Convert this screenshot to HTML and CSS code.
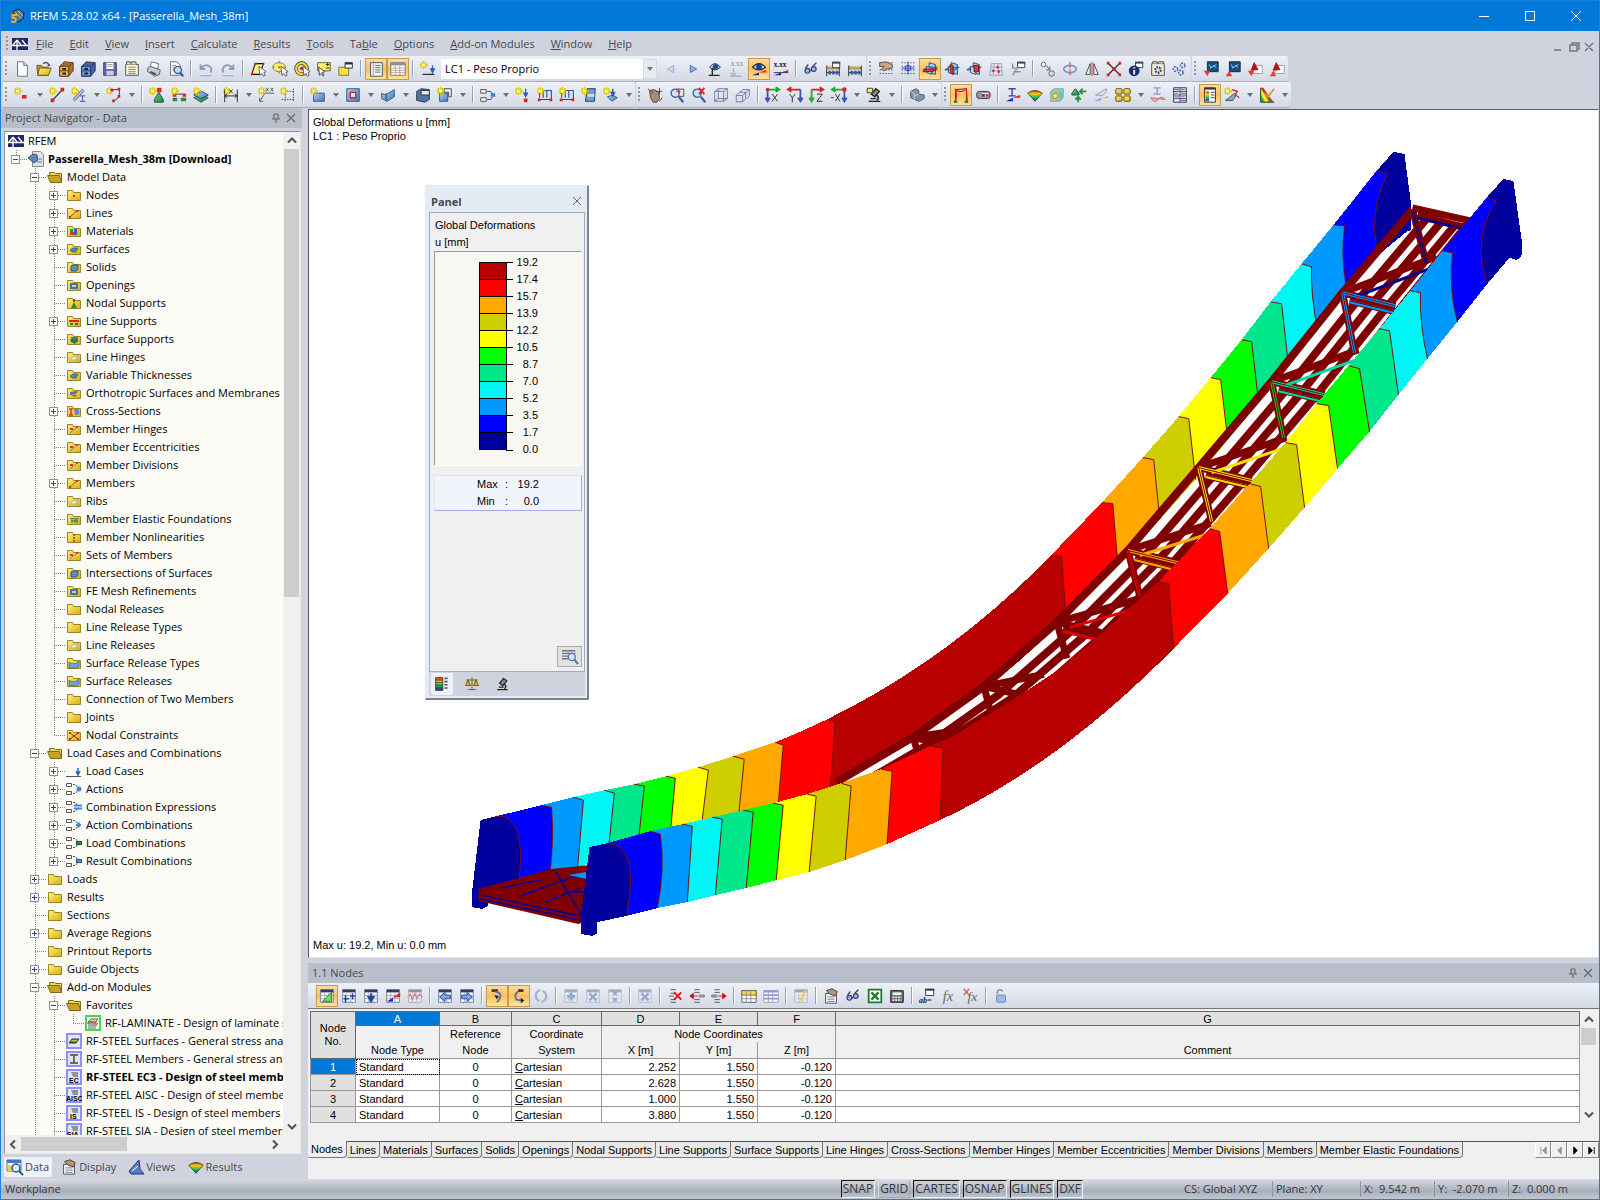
FILE: index.html
```html
<!DOCTYPE html>
<html lang="en">
<head>
<meta charset="utf-8">
<title>RFEM 5.28.02 x64 - [Passerella_Mesh_38m]</title>
<link rel="stylesheet" href="styles.css">
</head>
<body>
<svg class="defs" aria-hidden="true">
<defs>
<linearGradient id="gy" x1="0" y1="0" x2="1" y2="1"><stop offset="0" stop-color="#fff27a"/><stop offset="1" stop-color="#d9ae12"/></linearGradient>
<linearGradient id="gb" x1="0" y1="0" x2="1" y2="1"><stop offset="0" stop-color="#a9cdf0"/><stop offset="1" stop-color="#3f7ab8"/></linearGradient>
<linearGradient id="gg" x1="0" y1="0" x2="1" y2="1"><stop offset="0" stop-color="#7ed08a"/><stop offset="1" stop-color="#1c7a34"/></linearGradient>
<linearGradient id="rb" x1="0" y1="0" x2="0" y2="1"><stop offset="0" stop-color="#e22"/><stop offset=".3" stop-color="#fc0"/><stop offset=".6" stop-color="#2c4"/><stop offset="1" stop-color="#22d"/></linearGradient>
<symbol id="st" viewBox="0 0 20 20"><path d="M5 1v9M1 5.500h9M2 2.500l6 6M8 2.500l-6 6" stroke="#d8c400" stroke-width="1.500"/><circle cx="5" cy="5.500" r="2" fill="#fffb80"/></symbol>
<symbol id="logo" viewBox="0 0 16 14"><path fill="#1c2a66" d="M0 1h16v12H0z"/><path d="M0 8.500h16M5 3v10M5 3l-4 5M5 3l4 5M10 3l4 5" stroke="#fff" stroke-width="1.300" fill="none"/></symbol>
<symbol id="app" viewBox="0 0 16 16"><path d="M5 3l5-2 5 4-1 6-5 3-5-5z" fill="#5d7690" stroke="#223"/><path d="M6 4l6 6M9 3l5 5" stroke="#a8bccf"/><path d="M8 7H3.500v3c4-1 4.500 4 1 4L2 13.500" fill="none" stroke="#f2b01c" stroke-width="2"/></symbol>
<symbol id="new" viewBox="0 0 20 20"><path d="M5 2h7l4 4v12H5z" fill="#fff" stroke="#667"/><path d="M12 2v4h4" fill="#dde" stroke="#667"/></symbol>
<symbol id="open" viewBox="0 0 20 20"><path d="M2 6h5l2 2h6v9H3z" fill="#b8952a" stroke="#6d5614"/><path d="M5 9h13l-3 8H3z" fill="url(#gy)" stroke="#6d5614"/><path d="M9 4q4-3 7 2l-2 0" fill="none" stroke="#447" stroke-width="1.500"/></symbol>
<symbol id="box" viewBox="0 0 20 20"><path d="M3 7l5-5 10 1v9l-5 6H3z" fill="#a87428" stroke="#5a3c14"/><path d="M3 7h10v11H3zM13 7l5-4M3 12h10" fill="#e0b060" stroke="#5a3c14"/><path d="M6 10h4M6 15h4" stroke="#321" stroke-width="2"/></symbol>
<symbol id="boxb" viewBox="0 0 20 20"><path d="M3 7l5-5 10 1v9l-5 6H3z" fill="#4464a8" stroke="#22305c"/><path d="M3 7h10v11H3zM13 7l5-4M3 12h10" fill="#7496d8" stroke="#22305c"/><path d="M6 10h4M6 15h4" stroke="#124" stroke-width="2"/></symbol>
<symbol id="save" viewBox="0 0 20 20"><path d="M3 3h14v14H3z" fill="#6a62a8" stroke="#3c3768"/><path d="M6 3h8v7H6z" fill="#fff"/><path d="M6 12h8v5H6z" fill="#ccd"/><path d="M7 5h6M7 7h6" stroke="#999"/></symbol>
<symbol id="doc" viewBox="0 0 20 20"><path d="M3 5h14v12H3z" fill="#fdf6e0" stroke="#444"/><path d="M4 5V2h4l1 2 1-2h4l1 3" fill="#eda" stroke="#444"/><path d="M6 8h8M6 10.500h8M6 13h8M6 15h8" stroke="#777"/></symbol>
<symbol id="print" viewBox="0 0 20 20"><path d="M6 8l1-6 8 2-1 6z" fill="#fff" stroke="#667"/><path d="M3 9l3-2 11 4-1 5-5 2-8-5z" fill="#c4cad8" stroke="#556"/><path d="M6 13l6 3" stroke="#445" stroke-width="2"/></symbol>
<symbol id="prev" viewBox="0 0 20 20"><path d="M4 2h7l4 4v11H4z" fill="#fff" stroke="#667"/><path d="M6 6h4M6 8h3M6 10h3M6 12h3" stroke="#889"/><circle cx="12" cy="11" r="4" fill="#bcd8f4" stroke="#3b5f98" stroke-width="1.500"/><path d="M14.500 14l3.500 4" stroke="#3b5f98" stroke-width="2.500"/></symbol>
<symbol id="undo" viewBox="0 0 20 20"><path d="M4 5v5h5M5 9q5-6 10-1 2 3 0 6" fill="none" stroke="#8b9bb8" stroke-width="2"/><path d="M4 17.500h12" stroke="#8b9bb8"/></symbol>
<symbol id="redo" viewBox="0 0 20 20"><path d="M16 5v5h-5M15 9q-5-6-10-1-2 3 0 6" fill="none" stroke="#8b9bb8" stroke-width="2"/><path d="M4 17.500h12" stroke="#8b9bb8"/></symbol>
<symbol id="cur" viewBox="0 0 20 20"><path d="M11 7l1 10 2.500-2 1.500 3 2-1-1.500-3 2.500-1z" fill="#fff" stroke="#333" stroke-width=".8"/></symbol>
<symbol id="s1" viewBox="0 0 20 20"><path d="M7 4h9l-4 12H3z" fill="#fff38a" stroke="#111" stroke-width="1.200"/><path d="M6 3h3v2H6zM15 3h2v2h-2zM2 15h3v2H2z" fill="#e11"/><use href="#cur"/></symbol>
<symbol id="s2" viewBox="0 0 20 20"><ellipse cx="9" cy="8" rx="7" ry="5" fill="#ffee6a" stroke="#876"/><path d="M9 1v14M2 8h14" stroke="#e22" stroke-dasharray="2 4"/><use href="#cur"/></symbol>
<symbol id="s3" viewBox="0 0 20 20"><circle cx="9.500" cy="9.500" r="6" fill="none" stroke="#222" stroke-width="4"/><circle cx="9.500" cy="9.500" r="6" fill="none" stroke="#fd2" stroke-width="2.500"/><circle cx="9.500" cy="9.500" r="2" fill="#e22"/><use href="#cur"/></symbol>
<symbol id="s4" viewBox="0 0 20 20"><path d="M3 3h14v9H3z" fill="#ffee6a" stroke="#665c10"/><path d="M12 5h4M14 3v4M12 9h4" stroke="#222"/><path d="M4 8l1 9 2-2 2 3 1-1-2-3 3-1z" fill="#fff" stroke="#333"/></symbol>
<symbol id="s5" viewBox="0 0 20 20"><path d="M2 8h11v9H2z" fill="#ffe14a" stroke="#86701a"/><path d="M9 3h8v6H9z" fill="#fff" stroke="#223"/><path d="M9 3h8v2H9z" fill="#234"/></symbol>
<symbol id="nav" viewBox="0 0 20 20"><path d="M4 3h13v15H4z" fill="#fff" stroke="#345"/><path d="M7 4v13" stroke="#789"/><path d="M9 6h6M9 8.500h6M9 11h6M9 13.500h6" stroke="#456"/></symbol>
<symbol id="tab" viewBox="0 0 20 20"><path d="M2 3h16v14H2z" fill="#fff" stroke="#656c78"/><path d="M2 3h16v3H2z" fill="#8a94a4"/><path d="M2 9h16M2 11.500h16M2 14h16M7 6v11M12 6v11" stroke="#b2a890"/></symbol>
<symbol id="ld" viewBox="0 0 20 20"><use href="#st"/><path d="M4 16h13" stroke="#333" stroke-width="1.500"/><path d="M15 6v6M13 10l2 4 2-4z" stroke="#2b5fb4" stroke-width="1.500" fill="#2b5fb4"/></symbol>
<symbol id="lt" viewBox="0 0 20 20"><path d="M13 6v8l-7-4z" fill="#cfe0ff" stroke="#8ba3d0"/></symbol>
<symbol id="gt" viewBox="0 0 20 20"><path d="M7 6v8l7-4z" fill="#8fb0f0" stroke="#3d64b8"/></symbol>
<symbol id="ey1" viewBox="0 0 20 20"><path d="M4 8q6-8 12 0-6 6-12 0z" fill="#b9d2ef" stroke="#222"/><circle cx="10.500" cy="7.500" r="3" fill="#234a94"/><path d="M7 9v8M3 17h12" stroke="#222" stroke-width="1.500"/></symbol>
<symbol id="xx1" viewBox="0 0 20 20"><text x="3" y="7" font-size="8" fill="#888" font-family="Liberation Serif">x.xx</text><path d="M6 9v8M3 14l3 4 3-4M2 18h13" stroke="#a7b4cc" fill="none" stroke-width="1.500"/></symbol>
<symbol id="eye" viewBox="0 0 20 20"><path d="M3 8q7-8 14 0-7 6-14 0z" fill="#c9def5" stroke="#222" stroke-width="1.300"/><circle cx="10" cy="7.500" r="3.200" fill="#1c3f8a"/><path d="M2 17l8-3v3z" fill="#22c"/><path d="M10 14l8-3v3z" fill="#d22"/></symbol>
<symbol id="xx2" viewBox="0 0 20 20"><text x="2" y="8" font-size="8" font-weight="bold" fill="#111" font-family="Liberation Serif">x.xx</text><path d="M2 17l8-3v3z" fill="#22c"/><path d="M10 14l8-3v3z" fill="#d22"/><path d="M2 14h16" stroke="#333"/></symbol>
<symbol id="glas" viewBox="0 0 20 20"><path d="M4 9l3-4M12 7l4-4M8 12h2" stroke="#445" stroke-width="1.500"/><circle cx="6" cy="12" r="2.700" fill="#9fb4dc" stroke="#2b3f78" stroke-width="1.300"/><circle cx="13" cy="10" r="2.700" fill="#9fb4dc" stroke="#2b3f78" stroke-width="1.300"/></symbol>
<symbol id="aba" viewBox="0 0 20 20"><path d="M3 6v12M17 6v12M3 9h14M3 14h14" stroke="#222"/><path d="M4 7h3v4H4zM8 7h3v4H8zM12 7h3v4h-3z" fill="#ca4"/><path d="M5 12h3v4H5zM9 12h3v4H9zM13 12h3v4h-3z" fill="#3557a8"/></symbol>
<symbol id="win" viewBox="0 0 20 20"><path d="M9.500 2.500h8v6h-8z" fill="#fff" stroke="#334"/><path d="M9 2h9v2H9z" fill="#345"/></symbol>
<symbol id="dots" viewBox="0 0 20 20"><path d="M3 3h15M3 7h15M3 11h15M3 15h15" stroke="#333" stroke-width="1.200" stroke-dasharray="1.200 2"/></symbol>
<symbol id="hand" viewBox="0 0 20 20"><path d="M3 3l7-1 7 3v4l-6 1-4 2-2-2 3-3H3z" fill="#c8a58c" stroke="#5c4636"/></symbol>
<symbol id="snp" viewBox="0 0 20 20"><use href="#dots"/><circle cx="10" cy="9" r="3" fill="none" stroke="#23c"/><path d="M10 2v14M3 9h14" stroke="#23c"/></symbol>
<symbol id="pl" viewBox="0 0 20 20"><path d="M9 3l7 2v11l-7-2z" fill="#a8cdee" stroke="#1b4e84"/><path d="M2 11l5-3h11l-5 3z" fill="#6ea6d8" stroke="#1b4e84"/><path d="M6 7l6 2v7l-6-2z" fill="#bcdaf4" stroke="#1b4e84"/></symbol>
<symbol id="p1" viewBox="0 0 20 20"><use href="#pl"/><path d="M2 13l5-3h11l-5 3z" fill="#e33" stroke="#711"/></symbol>
<symbol id="p2" viewBox="0 0 20 20"><use href="#pl"/><path d="M8 5l3 1v10l-3-2z" fill="#e33" stroke="#711"/></symbol>
<symbol id="p3" viewBox="0 0 20 20"><use href="#pl"/><path d="M10 6h5v7h-5z" fill="#e33" stroke="#711"/></symbol>
<symbol id="grd" viewBox="0 0 20 20"><path d="M5 4h11l1 13H3zM4 8h12M4 12h12M8 4L7 17M12 4l1 13" fill="none" stroke="#8aa5d0"/><circle cx="12" cy="8" r="1.500" fill="#e22"/><circle cx="7" cy="12" r="1.500" fill="#e22"/><circle cx="13" cy="13" r="1.500" fill="#e22"/></symbol>
<symbol id="wr" viewBox="0 0 20 20"><path d="M4 17L9 9M4 4v5h5M5 13h8" fill="none" stroke="#8890a8" stroke-width="1.500"/><use href="#win"/></symbol>
<symbol id="cc" viewBox="0 0 20 20"><circle cx="5" cy="5" r="2.500" fill="#fff" stroke="#555"/><circle cx="14" cy="15" r="3" fill="#ddd" stroke="#555"/><path d="M8 6l4 5M12 7v4H8" stroke="#555" fill="none"/></symbol>
<symbol id="rot" viewBox="0 0 20 20"><ellipse cx="10" cy="10" rx="7" ry="4" fill="none" stroke="#7f97c8" stroke-width="2"/><path d="M10 2v16" stroke="#e22" stroke-dasharray="3 1"/></symbol>
<symbol id="mir" viewBox="0 0 20 20"><path d="M8 4v12H3zM12 4v12h5z" fill="#eee" stroke="#444"/><path d="M10 2v16" stroke="#e22"/></symbol>
<symbol id="xn" viewBox="0 0 20 20"><path d="M3 3l14 14M17 3L3 17" stroke="#333" stroke-width="1.500"/><path d="M2 2h3v3H2zM15 2h3v3h-3zM2 15h3v3H2zM15 15h3v3h-3zM8 8h4v4H8z" fill="#d22"/></symbol>
<symbol id="inf" viewBox="0 0 20 20"><use href="#win"/><circle cx="8" cy="12" r="6" fill="#1b2f78"/><path d="M8 8v1.500M8 11v5" stroke="#fff" stroke-width="2"/></symbol>
<symbol id="gr" viewBox="0 0 20 20"><path d="M3 4h14v13H3z" fill="#f4ecd0" stroke="#444"/><path d="M4 4V2h5l1 2 1-2h5v2" fill="#eda" stroke="#444"/><circle cx="10" cy="11" r="3" fill="none" stroke="#2b4a90" stroke-width="2.500" stroke-dasharray="2 1"/></symbol>
<symbol id="grs" viewBox="0 0 20 20"><g fill="#dbe6fa" stroke="#4c6fb4" stroke-width="1.800" stroke-dasharray="2 1"><circle cx="5" cy="10" r="2.500"/><circle cx="13" cy="6" r="2.500"/><circle cx="11" cy="14" r="2.500"/></g></symbol>
<symbol id="q1" viewBox="0 0 20 20"><path d="M6 2h12v11H6z" fill="#164f86" stroke="#123"/><path d="M8 5l2 4 3-3 3 3M9 9l7-4" stroke="#9cd" fill="none"/><path d="M2 12h7l-3 6z" fill="#e33"/></symbol>
<symbol id="q2" viewBox="0 0 20 20"><path d="M6 2h12v11H6z" fill="#164f86" stroke="#123"/><path d="M8 5l2 4 3-3 3 3M9 9l7-4" stroke="#9cd" fill="none"/><path d="M2 18h7l-3-6z" fill="#e33"/></symbol>
<symbol id="q3" viewBox="0 0 20 20"><path d="M8 6h10v9H8z" fill="#fff" stroke="#99a"/><path d="M5 12l4-10 5 9z" fill="#b11"/><path d="M2 12h7l-3 6z" fill="#e33"/></symbol>
<symbol id="q4" viewBox="0 0 20 20"><path d="M8 6h10v9H8z" fill="#fff" stroke="#99a"/><path d="M5 12l4-10 5 9z" fill="#b11"/><path d="M2 18h7l-3-6z" fill="#e33"/></symbol>
<symbol id="t1" viewBox="0 0 20 20"><use href="#st"/><path d="M10 10h5v4h-5z" fill="#d22"/></symbol>
<symbol id="t2" viewBox="0 0 20 20"><use href="#st"/><path d="M5 16L16 4" stroke="#333" stroke-width="1.500"/><path d="M3 14h4v4H3zM14 2h4v4h-4z" fill="#d22"/></symbol>
<symbol id="t3" viewBox="0 0 20 20"><use href="#st"/><path d="M4 16L15 4" stroke="#567" stroke-width="3.500"/><path d="M4 16L15 4" stroke="#ace" stroke-width="2"/><path d="M11 11h6M11 17h6M14 11v6" stroke="#34a"/></symbol>
<symbol id="t4" viewBox="0 0 20 20"><use href="#st"/><path d="M8 4h8v8l-6 5" fill="none" stroke="#333"/><path d="M14 2h3v3h-3zM14 10h3v3h-3zM8 15h3v3H8zM6 3h3v3H6z" fill="#d22"/></symbol>
<symbol id="t5" viewBox="0 0 20 20"><path d="M12 7l5 8v3H7v-3z" fill="url(#gg)" stroke="#154"/><path d="M10 2h5v5h-5z" fill="#e22"/><use href="#st"/></symbol>
<symbol id="t6" viewBox="0 0 20 20"><path d="M5 9h12" stroke="#333"/><path d="M3 9h4v3H3zM14 9h4v3h-4z" fill="#e22"/><path d="M3 13h5v4H3zM12 13h6v4h-6z" fill="#2a8a40"/><use href="#st"/></symbol>
<symbol id="t7" viewBox="0 0 20 20"><path d="M2 13l9-4 7 4-8 5z" fill="url(#gg)" stroke="#154"/><path d="M2 10l9-4 7 4-8 4z" fill="url(#gb)" stroke="#246"/><use href="#st"/></symbol>
<symbol id="t8" viewBox="0 0 20 20"><use href="#st"/><path d="M3 4v14M17 4v14M3 11h14M6 9l-3 2 3 2M14 9l3 2-3 2M8 4l4 4M12 4l-4 4" stroke="#222" fill="none"/></symbol>
<symbol id="t9" viewBox="0 0 20 20"><use href="#st"/><path d="M9 8h10M9 8L3 17M3 13v4h4" stroke="#555" fill="none"/><path d="M10 2l3 4M13 2l-3 4M15 2l3 4M18 2l-3 4" stroke="#555"/></symbol>
<symbol id="t10" viewBox="0 0 20 20"><path d="M7 3v15M16 3v15M3 6h15M3 15h15" stroke="#333" stroke-dasharray="1.500 1.500"/><use href="#st"/></symbol>
<symbol id="u1" viewBox="0 0 20 20"><path d="M5 8h12v9H5z" fill="url(#gb)" stroke="#357"/><use href="#st"/></symbol>
<symbol id="u2" viewBox="0 0 20 20"><path d="M3 3h14v14H3z" fill="url(#gb)" stroke="#357"/><path d="M7 7h6v6H7z" fill="#dce8f6" stroke="#c22" stroke-width="1.500"/></symbol>
<symbol id="u3" viewBox="0 0 20 20"><path d="M3 8l4 2 10-6v8L9 17 3 14z" fill="url(#gb)" stroke="#357"/><path d="M8 8v8" stroke="#246"/></symbol>
<symbol id="u4" viewBox="0 0 20 20"><path d="M3 6l5-3 9 1v11l-5 3-9-2z" fill="#51759f" stroke="#234"/><path d="M8 5h9v5H8z" fill="#dfe9f5" stroke="#234"/></symbol>
<symbol id="u5" viewBox="0 0 20 20"><path d="M4 8h9v9H4z" fill="url(#gb)" stroke="#357"/><path d="M9 3h8v9h-3V7H9z" fill="#e6eefa" stroke="#444"/><use href="#st"/></symbol>
<symbol id="cmb" viewBox="0 0 20 20"><path d="M2 4h6v4H2zM2 13h6v4H2z" fill="#fff" stroke="#444"/><path d="M9 6h4l2 3M9 15h4l2-3" fill="none" stroke="#444"/></symbol>
<symbol id="v1" viewBox="0 0 20 20"><use href="#cmb"/><path d="M13 8h5v4h-5z" fill="#3d82d8"/></symbol>
<symbol id="v2" viewBox="0 0 20 20"><use href="#st"/><path d="M13 3v6M11 8l2 4 2-4z" stroke="#35a" stroke-width="1.300" fill="#35a"/><path d="M11 14h4v4h-4z" fill="#d22"/></symbol>
<symbol id="v3" viewBox="0 0 20 20"><path d="M4 5h13v10M8 5v8M12 5v8M4 5v8" stroke="#35a" stroke-width="1.300" fill="none"/><path d="M3 15h15" stroke="#333"/><path d="M2 14h3v3H2zM15 14h3v3h-3z" fill="#d22"/><use href="#st"/></symbol>
<symbol id="v5" viewBox="0 0 20 20"><path d="M8 3h9l-1 14H6z" fill="#6f9dcc" stroke="#234"/><path d="M9 9h7v3H8z" fill="#cde"/><use href="#st"/></symbol>
<symbol id="v6" viewBox="0 0 20 20"><path d="M6 12l6-2 5 3-6 4z" fill="url(#gb)" stroke="#357"/><path d="M12 3v6M10 7l2 4 2-4z" stroke="#35a" stroke-width="1.500" fill="#35a"/><use href="#st"/></symbol>
<symbol id="w1" viewBox="0 0 20 20"><path d="M4 5l5-1 5 3 1 7-3 4H8l-3-5z" fill="#a88c78" stroke="#443"/><path d="M15 2v8M11 6h7M2 3l6 5M15 17l3-4" stroke="#444"/></symbol>
<symbol id="w2" viewBox="0 0 20 20"><path d="M9.500 3.500h8v8h-8z" fill="none" stroke="#444"/><circle cx="8" cy="8" r="4.500" fill="#cfe2f6" stroke="#3b5f98" stroke-width="1.500"/><path d="M12 12l5 6" stroke="#3b5f98" stroke-width="2.500"/><path d="M12 3v5M9 6h5" stroke="#d22"/></symbol>
<symbol id="w3" viewBox="0 0 20 20"><circle cx="8" cy="8" r="4.500" fill="#cfe2f6" stroke="#3b5f98" stroke-width="1.500"/><path d="M12 12l5 6" stroke="#3b5f98" stroke-width="2.500"/><path d="M10 2l6 7M16 2l-6 7" stroke="#d22" stroke-width="2"/></symbol>
<symbol id="w4" viewBox="0 0 20 20"><path d="M3 6h10v11H3zM7 3h10v11H7zM3 6l4-3M13 6l4-3M13 17l4-3M3 17l4-3" fill="none" stroke="#6876a4"/></symbol>
<symbol id="w5" viewBox="0 0 20 20"><path d="M2.500 10.500h7v7h-7zM6 7l4-3h7v7l-3 3M10 10l7-6M2.500 10.500L6 7h7v7l-3.500 3.500" fill="none" stroke="#6876a4"/></symbol>
<symbol id="ax" viewBox="0 0 20 20"><path d="M4 4h12M13 1.500l4 2.500-4 2.500" stroke="#1a3" stroke-width="2" fill="none"/><path d="M4 4v12M1.500 13L4 17l2.500-4" stroke="#35b" stroke-width="2" fill="none"/><circle cx="4" cy="4" r="2" fill="#d22"/></symbol>
<symbol id="x1" viewBox="0 0 20 20"><use href="#ax"/><path d="M9 9l6 8M15 9l-6 8" stroke="#222"/></symbol>
<symbol id="x2" viewBox="0 0 20 20"><path d="M3 4h13M6 1.500L2 4l4 2.500" stroke="#d22" stroke-width="2" fill="none"/><path d="M16 4v12M13.500 13l2.500 4 2.500-4" stroke="#35b" stroke-width="2" fill="none"/><path d="M4 9l3 4 3-4M7 13v5" stroke="#222" fill="none"/></symbol>
<symbol id="x3" viewBox="0 0 20 20"><path d="M4 4h12M13 1.500l4 2.500-4 2.500" stroke="#d22" stroke-width="2" fill="none"/><path d="M4 4v12M1.500 13L4 17l2.500-4" stroke="#2a3" stroke-width="2" fill="none"/><path d="M10 9h6l-6 8h6" stroke="#222" fill="none"/></symbol>
<symbol id="x4" viewBox="0 0 20 20"><path d="M3 4h13M6 1.500L2 4l4 2.500" stroke="#2a3" stroke-width="2" fill="none"/><path d="M16 4v12M13.500 13l2.500 4 2.500-4" stroke="#35b" stroke-width="2" fill="none"/><circle cx="16" cy="4" r="2.500" fill="#d22"/><path d="M6 9l5 8M11 9l-5 8M1 13h3" stroke="#222"/></symbol>
<symbol id="mic" viewBox="0 0 20 20"><path d="M12 3l4 3-5 6-4-3zM13 10q4 3 0 6M4 17h13M6 14h6" stroke="#222" stroke-width="1.500" fill="#888"/></symbol>
<symbol id="x5" viewBox="0 0 20 20"><use href="#mic"/><path d="M2.500 2.500h6v5h-6z" fill="#fe3" stroke="#333"/></symbol>
<symbol id="x6" viewBox="0 0 20 20"><path d="M3 6l6-3 3 2v4l6 1v4l-6 3-9-4z" fill="#8292a6" stroke="#556"/><path d="M3 6l4 3v6M12 9l-5 2" stroke="#cdd8e4" fill="none"/></symbol>
<symbol id="y1" viewBox="0 0 20 20"><path d="M4 17V4l12-1v14" fill="none" stroke="#333"/><path d="M3 17Q7 12 4 4q7 5 12-1l1 14" fill="none" stroke="#d22" stroke-width="1.300"/><path d="M2 16h4v3H2zM14 16h4v3h-4z" fill="#2a8a40"/></symbol>
<symbol id="y2" viewBox="0 0 20 20"><rect x="3" y="6" width="15" height="8" rx="3" fill="#999" stroke="#333"/><path d="M9 8h7v4H9z" fill="#fff"/><path d="M9 9h3v3H9z" fill="#22c"/><path d="M13 9h3v3h-3z" fill="#d22"/></symbol>
<symbol id="y3" viewBox="0 0 20 20"><path d="M5 3h8M5 11h8M9 3v8" stroke="#34a" stroke-width="1.500"/><path d="M2 17l8-4v4z" fill="#22c"/><path d="M10 13l8-3v3z" fill="#d22"/></symbol>
<symbol id="y4" viewBox="0 0 20 20"><path d="M2 8q8-6 16 0l-8 9z" fill="url(#rb)" stroke="#343"/></symbol>
<symbol id="y5" viewBox="0 0 20 20"><path d="M3 6l4-3h10v10l-4 4H3z" fill="#8ecf9c" stroke="#7ab"/><circle cx="8" cy="11" r="3" fill="#ee4" stroke="#e55"/><path d="M14 6v10" stroke="#6bd" stroke-width="2"/></symbol>
<symbol id="y6" viewBox="0 0 20 20"><path d="M6 3l4 5v2H2V8z" fill="url(#gg)" stroke="#154"/><path d="M18 6h-6M14 3l-3 3 3 3M9 18v-5M6 15l3-3 3 3" stroke="#1a9a30" stroke-width="2" fill="none"/></symbol>
<symbol id="y7" viewBox="0 0 20 20"><path d="M4 10l12-7q2 3-5 8z" fill="#d5dbe8" stroke="#99a"/><path d="M2 17l8-4v3z" fill="#99e"/><path d="M10 14l8-3v2z" fill="#e99"/></symbol>
<symbol id="y8" viewBox="0 0 20 20"><g fill="url(#gy)" stroke="#54480e"><rect x="2" y="3" width="7" height="6" rx="1"/><rect x="11" y="3" width="7" height="6" rx="1"/><rect x="2" y="11" width="7" height="6" rx="1"/><rect x="11" y="11" width="7" height="6" rx="1"/></g></symbol>
<symbol id="y9" viewBox="0 0 20 20"><path d="M5 2h8M9 2v7M5 9h8" stroke="#889cc8" stroke-width="1.500"/><path d="M2 13q4 7 8 2 4-5 8 0z" fill="#eaa" stroke="#c66"/></symbol>
<symbol id="y10" viewBox="0 0 20 20"><path d="M3 2h14v16H3z" fill="#eef" stroke="#223"/><path d="M10 2v16M3 6h14M3 10h14M3 14h14" stroke="#445"/><path d="M4 4h5M11 8h5M4 12h5M11 16h5" stroke="#35c"/><path d="M11 4h4M4 8h4M11 12h4" stroke="#d33"/></symbol>
<symbol id="z1" viewBox="0 0 20 20"><path d="M4 2h12v16H4z" fill="#fff" stroke="#222"/><path d="M4 2h12v2H4z" fill="#333"/><path d="M5 6h4v11H5z" fill="url(#rb)"/><path d="M11 7h4M11 10h4M11 13h4" stroke="#333"/></symbol>
<symbol id="z2" viewBox="0 0 20 20"><path d="M3 16l10-8q3 1-2 8z" fill="#8eaacc" stroke="#345"/><path d="M10 4l6 2-2 3M13 9l5 4" stroke="#c22" fill="none" stroke-width="1.300"/><use href="#st"/></symbol>
<symbol id="z3" viewBox="0 0 20 20"><path d="M3 2v16h15z" fill="#26c03a"/><path d="M3 2l9 16H8L3 9z" fill="#fe2"/><path d="M3 2h3l10 15h-3z" fill="#e22"/><path d="M7 8l4 4 7-9" stroke="#d59a28" stroke-width="2" fill="none"/><path d="M3 2v16h15" fill="none" stroke="#222"/></symbol>
<symbol id="gd" viewBox="0 0 20 20"><path d="M3 3h14v14H3z" fill="#fff" stroke="#678"/><path d="M3 3h14v3H3z" fill="#2c3e66"/><path d="M3 9.500h14M3 13h14M7.500 6v11M12 6v11" stroke="#98a6c0"/></symbol>
<symbol id="a1" viewBox="0 0 20 20"><use href="#gd"/><path d="M5 16L15 6v10z" fill="#7d6" stroke="#272"/></symbol>
<symbol id="a2" viewBox="0 0 20 20"><use href="#gd"/><path d="M4 13h6M14 7v7M11 10h6M6 9v8" stroke="#24459a" stroke-width="1.500"/></symbol>
<symbol id="a3" viewBox="0 0 20 20"><use href="#gd"/><path d="M10 7v5M7 11l3 5 3-5z" fill="#24459a" stroke="#24459a" stroke-width="2"/></symbol>
<symbol id="a4" viewBox="0 0 20 20"><use href="#gd"/><path d="M3 16l7-4v4z" fill="#22c"/><path d="M9 12l9-6v5z" fill="#d22"/></symbol>
<symbol id="a5" viewBox="0 0 20 20"><g opacity=".5"><use href="#gd"/><path d="M2 11l3-3 2 6 3-7 2 6 3-5 3 3" stroke="#d22" stroke-width="1.500" fill="none"/></g></symbol>
<symbol id="a6" viewBox="0 0 20 20"><use href="#gd"/><path d="M16 9h-6V6l-6 5 6 5v-3h6z" fill="#79a7ea" stroke="#24459a"/></symbol>
<symbol id="a7" viewBox="0 0 20 20"><use href="#gd"/><path d="M4 9h6V6l6 5-6 5v-3H4z" fill="#79a7ea" stroke="#24459a"/></symbol>
<symbol id="b1" viewBox="0 0 20 20"><path d="M4 4h7" stroke="#334" stroke-width="3" fill="none"/><path d="M8 5q8 1 5 8l-3 4" stroke="#4a70b8" stroke-width="2" fill="none"/><path d="M7 9l5 1-2 4z" fill="#223"/></symbol>
<symbol id="b2" viewBox="0 0 20 20"><path d="M15 4H9" stroke="#334" stroke-width="3" fill="none"/><path d="M9 5q-5 4-2 9l6 1" stroke="#4a70b8" stroke-width="2" fill="none"/><path d="M12 12l4 3-4 3z" fill="#223"/></symbol>
<symbol id="b3" viewBox="0 0 20 20"><path d="M9 3q-7 4-4 10l3 3M11 17q7-4 4-10l-3-3" stroke="#a3b3ce" stroke-width="2.500" fill="none"/></symbol>
<symbol id="c1" viewBox="0 0 20 20"><g opacity=".35"><use href="#gd"/></g><path d="M10 6v9M5.500 10.500h9" stroke="#8fa9da" stroke-width="3"/></symbol>
<symbol id="c2" viewBox="0 0 20 20"><g opacity=".35"><use href="#gd"/></g><path d="M6 7l8 8M14 7l-8 8" stroke="#8fa9da" stroke-width="2.500"/></symbol>
<symbol id="c3" viewBox="0 0 20 20"><g opacity=".35"><use href="#gd"/></g><path d="M10 5v4M10 12v4" stroke="#8fa9da" stroke-width="4"/></symbol>
<symbol id="d1" viewBox="0 0 20 20"><path d="M5 3h6M5 7h6M3 10h6M5 14h6M5 17h6" stroke="#555"/><path d="M9 6l8 8M17 6l-8 8" stroke="#d11" stroke-width="2"/></symbol>
<symbol id="d2" viewBox="0 0 20 20"><path d="M7 3h6M7 6h6M7 14h6M7 17h6M12 9h6v2h-6" stroke="#555" fill="none"/><path d="M11 10H4M6 7l-4 3 4 3z" stroke="#d11" fill="#d11"/></symbol>
<symbol id="d3" viewBox="0 0 20 20"><path d="M5 3h6M5 6h6M5 14h6M5 17h6M8 9H2v2h6" stroke="#555" fill="none"/><path d="M9 10h7M14 7l4 3-4 3z" stroke="#d11" fill="#d11"/></symbol>
<symbol id="e1" viewBox="0 0 20 20"><path d="M2 4h16v13H2z" fill="#fff" stroke="#556"/><path d="M2 4h16v5H2z" fill="#f6e12c" stroke="#765"/><path d="M7 4v13M12 4v13M2 13h16" stroke="#889"/></symbol>
<symbol id="e2" viewBox="0 0 20 20"><path d="M2 4h16v13H2z" fill="#fff" stroke="#99a"/><path d="M2 5h16M2 9h16M2 13h16" stroke="#8c98e0" stroke-width="2"/><path d="M7 4v13M12 4v13" stroke="#99a"/></symbol>
<symbol id="e3" viewBox="0 0 20 20"><g opacity=".4"><use href="#gd"/></g><path d="M15 4l-5 10-3-2" stroke="#ead060" stroke-width="2.500" fill="none"/></symbol>
<symbol id="h1" viewBox="0 0 20 20"><path d="M4 7h12v11H4z" fill="#fff" stroke="#444"/><path d="M6 11h8M6 13.500h8M6 16h8" stroke="#669"/><path d="M5 4l6-2 6 3-2 5-6-2z" fill="#b8937a" stroke="#4c3426"/></symbol>
<symbol id="h3" viewBox="0 0 20 20"><path d="M3 3h14v14H3z" fill="#fff" stroke="#197a2e" stroke-width="2"/><path d="M6 6l8 8M14 6l-8 8" stroke="#197a2e" stroke-width="2.500"/></symbol>
<symbol id="h4" viewBox="0 0 20 20"><path d="M3 4h14v13H3z" fill="#666" stroke="#222"/><path d="M5 6h10v3H5z" fill="#dfe"/><path d="M5 11.500h10M5 14.500h10" stroke="#eee" stroke-width="2" stroke-dasharray="2 1"/></symbol>
<symbol id="i1" viewBox="0 0 20 20"><path d="M8.500 2.500h9v7h-9z" fill="#fff" stroke="#334"/><path d="M8 2h10v2H8z" fill="#234"/><text x="1" y="18" font-size="9" font-weight="bold" font-style="italic" font-family="Liberation Serif" fill="#222">ab=</text></symbol>
<symbol id="i2" viewBox="0 0 20 20"><text x="3" y="15" font-size="16" font-style="italic" font-family="Liberation Serif" fill="#666">fx</text></symbol>
<symbol id="i3" viewBox="0 0 20 20"><text x="6" y="16" font-size="15" font-style="italic" font-family="Liberation Serif" fill="#666">fx</text><path d="M2 2l6 7M8 2L2 9" stroke="#d55" stroke-width="1.500"/></symbol>
<symbol id="i4" viewBox="0 0 20 20"><path d="M6 8V5q3-4 6 0" fill="none" stroke="#99a" stroke-width="2"/><rect x="5" y="9" width="10" height="8" rx="1" fill="#9db8ea" stroke="#6a86c0"/></symbol>
<symbol id="fo" viewBox="0 0 16 16"><path d="M1.500 3.500h5l1 2h7v8h-13z" fill="url(#gy)" stroke="#9a8426"/></symbol>
<symbol id="fop" viewBox="0 0 16 16"><path d="M2.500 3.500h5l1 1h6v9h-11z" fill="#f0d652" stroke="#7d6a1c"/><path d="M.5 6.500h12l2 7h-11z" fill="#c4a52a" stroke="#7d6a1c"/></symbol>
<symbol id="fd" viewBox="0 0 16 16"><path d="M4.500.5h8l3 3v12h-11z" fill="#dfe4ea" stroke="#889"/><path d="M0 7l5-4 4 1 1 5-4 3z" fill="#5f8ab8" stroke="#456"/><path d="M11 8h3M9 11h5" stroke="#778"/></symbol>
<symbol id="n1" viewBox="0 0 16 16"><path d="M7 8h2v2H7z" fill="#d22"/></symbol>
<symbol id="n2" viewBox="0 0 16 16"><path d="M4 12l7-6" stroke="#a44"/><path d="M3 11h2v2H3zM10 5h2v2h-2z" fill="#d22"/></symbol>
<symbol id="n3" viewBox="0 0 16 16"><path d="M4 6h3v3H4z" fill="#2b9a3a"/><path d="M4 9h4v3H4z" fill="#d33"/><path d="M8 6h3v6H8z" fill="#2d62c0"/></symbol>
<symbol id="n4" viewBox="0 0 16 16"><path d="M4 9l3-2h5l-2 4H6z" fill="#4b86c8" stroke="#357" stroke-width=".7"/></symbol>
<symbol id="n5" viewBox="0 0 16 16"><path d="M5 7l2-1h5v4l-2 2H5z" fill="#5b8fc4" stroke="#357"/></symbol>
<symbol id="n6" viewBox="0 0 16 16"><path d="M5 7h6v4H5z" fill="#dca" stroke="#3c74b0" stroke-width="2"/></symbol>
<symbol id="n7" viewBox="0 0 16 16"><path d="M8 7l3 6H5z" fill="#2a8a40"/><path d="M7 4h2v3H7z" fill="#d22"/></symbol>
<symbol id="n8" viewBox="0 0 16 16"><path d="M3 8h10" stroke="#d22" stroke-width="2"/><path d="M4 10h3v2H4zM9 10h3v2H9z" fill="#1c8a3c"/></symbol>
<symbol id="n9" viewBox="0 0 16 16"><path d="M4 8l8-1v3l-3 3-4-2z" fill="#1d8048"/><path d="M4 6h8v2l-4 1z" fill="#3d77b4"/></symbol>
<symbol id="n10" viewBox="0 0 16 16"><path d="M4 11l4-4 4 2-3 2z" fill="#e6eef8" stroke="#aab"/></symbol>
<symbol id="n11" viewBox="0 0 16 16"><path d="M4 7l8-1-2 3-6 1z" fill="#3d77b4"/><path d="M5 10h6l-2 2z" fill="#d33"/></symbol>
<symbol id="n12" viewBox="0 0 16 16"><path d="M3 6h4M3 12h4M5 6v6" stroke="#d33" stroke-width="1.500"/><path d="M8 6h5v5l-4 1z" fill="#5b87e0"/></symbol>
<symbol id="n13" viewBox="0 0 16 16"><path d="M4 12l7-6" stroke="#778"/><path d="M4 7h3v2H4zM10 5h2v2h-2z" fill="#d33"/></symbol>
<symbol id="n14" viewBox="0 0 16 16"><path d="M5 10h7M6 8v4M9 8v4M11 8v4" stroke="#1c8a5c"/><path d="M4 7h9v1H4z" fill="#777"/></symbol>
<symbol id="n15" viewBox="0 0 16 16"><path d="M8 5v8" stroke="#a33" stroke-width="1.500" stroke-dasharray="2 1"/></symbol>
<symbol id="n16" viewBox="0 0 16 16"><path d="M3 7q5 4 10-1v5l-3 2H3z" fill="#6fa3dc" stroke="#357" stroke-width=".6"/></symbol>
<symbol id="n17" viewBox="0 0 16 16"><path d="M4 6l8 6M12 6l-8 6" stroke="#822"/><path d="M3 5h2v2H3zM11 5h2v2h-2zM3 11h2v2H3zM11 11h2v2h-2z" fill="#d22"/></symbol>
<symbol id="lc" viewBox="0 0 16 16"><path d="M0 13.500h15" stroke="#555"/><path d="M12 5v5M10.500 9l1.500 3 1.500-3z" stroke="#2b62c0" stroke-width="1.500" fill="#2b62c0"/></symbol>
<symbol id="k0" viewBox="0 0 16 16"><path d="M.5 2.500h5v3h-5zM.5 10.500h5v3h-5z" fill="#fff" stroke="#555"/><path d="M7 3.500q4 0 4 3M7 12.500q4 0 4-3" fill="none" stroke="#444" stroke-dasharray="2 1"/></symbol>
<symbol id="k1" viewBox="0 0 16 16"><use href="#k0"/><circle cx="13" cy="8" r="2.500" fill="#3f87e6"/></symbol>
<symbol id="k2" viewBox="0 0 16 16"><use href="#k0"/><path d="M8 6.500h8M8 9.500h8" stroke="#3f87e6" stroke-width="2"/></symbol>
<symbol id="k3" viewBox="0 0 16 16"><use href="#k0"/><path d="M12.500 5l3 3-3 3-3-3z" fill="#3f87e6"/></symbol>
<symbol id="k4" viewBox="0 0 16 16"><use href="#k0"/><path d="M10.500 6.500h5v3h-5z" fill="#1ca33c" stroke="#143"/></symbol>
<symbol id="k5" viewBox="0 0 16 16"><use href="#k0"/><path d="M10.500 6.500h5v3h-5z" fill="#5a97e8" stroke="#246"/></symbol>
<symbol id="m0" viewBox="0 0 16 16"><path d="M1 1h14v14H1z" fill="#dfe6ee" stroke="#8e8eff" stroke-width="2"/></symbol>
<symbol id="m1" viewBox="0 0 16 16"><path d="M1 1h14v14H1z" fill="#fff" stroke="#3fdc4a" stroke-width="2"/><path d="M3 7l3-3h7l-2 3zM3 7h8v2H3zM3 11h8l2-3M3 13h8" fill="#f4c98c" stroke="#666"/></symbol>
<symbol id="m2" viewBox="0 0 16 16"><use href="#m0"/><path d="M3 10l3-4h7l-3 4z" fill="url(#rb)" stroke="#333"/></symbol>
<symbol id="m3" viewBox="0 0 16 16"><use href="#m0"/><path d="M4 4h8M4 12h8M8 4v8" stroke="#667" stroke-width="2"/></symbol>
<symbol id="mg" viewBox="0 0 16 16"><use href="#m0"/><path d="M5 3h7v5H7z" fill="#8a94a2"/></symbol>
</defs>
</svg>

<div class="app">
<header class="title"><svg class="i16"><use href="#app"/></svg><h1>RFEM 5.28.02 x64 - [Passerella_Mesh_38m]</h1>
<div class="wbtns"><button aria-label="Minimize"><svg viewBox="0 0 10 10"><path d="M0 5.500h10"/></svg></button><button aria-label="Maximize"><svg viewBox="0 0 10 10"><path d="M.5.5h9v9h-9z"/></svg></button><button aria-label="Close"><svg viewBox="0 0 10 10"><path d="M0 0l10 10M10 0L0 10"/></svg></button></div></header>
<nav class="menu"><i class="grip"></i><svg class="i16"><use href="#logo"/></svg>
<button><u>F</u>ile</button><button><u>E</u>dit</button><button><u>V</u>iew</button><button><u>I</u>nsert</button><button><u>C</u>alculate</button><button><u>R</u>esults</button><button><u>T</u>ools</button><button>Ta<u>b</u>le</button><button><u>O</u>ptions</button><button><u>A</u>dd-on Modules</button><button><u>W</u>indow</button><button><u>H</u>elp</button>
<svg class="mdi" viewBox="0 0 40 10"><path d="M0 8h7M16 3h7v6h-7zM18 3V1h7v6h-2M31 1l8 8M39 1l-8 8" fill="none" stroke="#777" stroke-width="1.500"/></svg></nav>

<div class="bars">
<div class="row">
<div class="band" role="toolbar"><i class="grip"></i>
<button><svg><use href="#new"/></svg></button><button><svg><use href="#open"/></svg></button><button><svg><use href="#box"/></svg></button><button><svg><use href="#boxb"/></svg></button><button><svg><use href="#save"/></svg></button><button><svg><use href="#doc"/></svg></button><button><svg><use href="#print"/></svg></button><button><svg><use href="#prev"/></svg></button><i class="sep"></i>
<button><svg><use href="#undo"/></svg></button><button><svg><use href="#redo"/></svg></button><i class="sep"></i>
<button><svg><use href="#s1"/></svg></button><button><svg><use href="#s2"/></svg></button><button><svg><use href="#s3"/></svg></button><button><svg><use href="#s4"/></svg></button><button><svg><use href="#s5"/></svg></button><i class="sep"></i>
<button class="on"><svg><use href="#nav"/></svg></button><button class="on"><svg><use href="#tab"/></svg></button><i class="sep"></i>
<button><svg><use href="#ld"/></svg></button>
<select class="combo" aria-label="Load case"><option>LC1 - Peso Proprio</option></select>
<button><svg><use href="#lt"/></svg></button><button><svg><use href="#gt"/></svg></button><button><svg><use href="#ey1"/></svg></button><button><svg><use href="#xx1"/></svg></button><button class="on"><svg><use href="#eye"/></svg></button><button><svg><use href="#xx2"/></svg></button><i class="sep"></i>
<button><svg><use href="#glas"/></svg></button><button><svg><use href="#aba"/><use href="#win"/></svg></button><button><svg><use href="#aba"/></svg></button></div>
<div class="band" role="toolbar"><i class="grip"></i>
<button><svg><use href="#dots"/><use href="#hand"/></svg></button><button><svg><use href="#snp"/></svg></button><button class="on"><svg><use href="#p1"/></svg></button><button><svg><use href="#p2"/></svg></button><button><svg><use href="#p3"/></svg></button><button><svg><use href="#grd"/></svg></button><button><svg><use href="#wr"/></svg></button><i class="sep"></i>
<button><svg><use href="#cc"/></svg></button><button><svg><use href="#rot"/></svg></button><button><svg><use href="#mir"/></svg></button><button><svg><use href="#xn"/></svg></button><button><svg><use href="#inf"/></svg></button><button><svg><use href="#gr"/></svg></button><button><svg><use href="#grs"/></svg></button></div>
<div class="band" role="toolbar"><i class="grip"></i>
<button><svg><use href="#q1"/></svg></button><button><svg><use href="#q2"/></svg></button><button><svg><use href="#q3"/></svg></button><button><svg><use href="#q4"/></svg></button></div>
</div>
<div class="row">
<div class="band" role="toolbar"><i class="grip"></i>
<button><svg><use href="#t1"/></svg></button><button class="dd"></button><button><svg><use href="#t2"/></svg></button><button><svg><use href="#t3"/></svg></button><button class="dd"></button><button><svg><use href="#t4"/></svg></button><button class="dd"></button><i class="sep"></i>
<button><svg><use href="#t5"/></svg></button><button><svg><use href="#t6"/></svg></button><button><svg><use href="#t7"/></svg></button><i class="sep"></i>
<button><svg><use href="#t8"/></svg></button><button class="dd"></button><button><svg><use href="#t9"/></svg></button><button><svg><use href="#t10"/></svg></button><i class="sep"></i>
<button><svg><use href="#u1"/></svg></button><button class="dd"></button><button><svg><use href="#u2"/></svg></button><button class="dd"></button><button><svg><use href="#u3"/></svg></button><button class="dd"></button><button><svg><use href="#u4"/></svg></button><button><svg><use href="#u5"/></svg></button><button class="dd"></button><i class="sep"></i>
<button><svg><use href="#v1"/></svg></button><button class="dd"></button><button><svg><use href="#v2"/></svg></button><button><svg><use href="#v3"/></svg></button><button><svg><use href="#v3"/></svg></button><button><svg><use href="#v5"/></svg></button><button><svg><use href="#v6"/></svg></button><button class="dd"></button></div>
<div class="band" role="toolbar"><i class="grip"></i>
<button><svg><use href="#w1"/></svg></button><button><svg><use href="#w2"/></svg></button><button><svg><use href="#w3"/></svg></button><button><svg><use href="#w4"/></svg></button><button><svg><use href="#w5"/></svg></button><i class="sep"></i>
<button><svg><use href="#x1"/></svg></button><button><svg><use href="#x2"/></svg></button><button><svg><use href="#x3"/></svg></button><button><svg><use href="#x4"/></svg></button><button class="dd"></button><button><svg><use href="#x5"/></svg></button><button class="dd"></button><i class="sep"></i>
<button><svg><use href="#x6"/></svg></button><button class="dd"></button></div>
<div class="band" role="toolbar"><i class="grip"></i>
<button class="on"><svg><use href="#y1"/></svg></button><button><svg><use href="#y2"/></svg></button><i class="sep"></i>
<button><svg><use href="#y3"/></svg></button><button><svg><use href="#y4"/></svg></button><button><svg><use href="#y5"/></svg></button><button><svg><use href="#y6"/></svg></button><button><svg><use href="#y7"/></svg></button><button><svg><use href="#y8"/></svg></button><button class="dd"></button><button><svg><use href="#y9"/></svg></button><button><svg><use href="#y10"/></svg></button><i class="sep"></i>
<button class="on"><svg><use href="#z1"/></svg></button><button><svg><use href="#z2"/></svg></button><button class="dd"></button><button><svg><use href="#z3"/></svg></button><button class="dd"></button></div>
</div>
</div>

<main class="work">
<aside class="side">
<div class="cap"><h2>Project Navigator - Data</h2><svg viewBox="0 0 24 10"><path d="M2 1v5M6 1v5M0 6h8M4 6v4M2 1h4M15 1l8 8M23 1l-8 8" fill="none" stroke="#666" stroke-width="1.200"/></svg></div>
<div class="treebox">
<div class="treewrap">
<div class="tree">
<div class="r root"><svg><use href="#logo"/></svg>RFEM</div>
<ul class="last"><li><div class="r"><button class="m"></button><svg><use href="#fd"/></svg><b>Passerella_Mesh_38m [Download]</b></div>
<ul><li><div class="r"><button class="m"></button><svg><use href="#fop"/></svg>Model Data</div>
<ul class="last">
<li><div class="r"><button class="p"></button><svg><use href="#fo"/><use href="#n1"/></svg>Nodes</div></li>
<li><div class="r"><button class="p"></button><svg><use href="#fo"/><use href="#n2"/></svg>Lines</div></li>
<li><div class="r"><button class="p"></button><svg><use href="#fo"/><use href="#n3"/></svg>Materials</div></li>
<li><div class="r"><button class="p"></button><svg><use href="#fo"/><use href="#n4"/></svg>Surfaces</div></li>
<li><div class="r"><svg><use href="#fo"/><use href="#n5"/></svg>Solids</div></li>
<li><div class="r"><svg><use href="#fo"/><use href="#n6"/></svg>Openings</div></li>
<li><div class="r"><svg><use href="#fo"/><use href="#n7"/></svg>Nodal Supports</div></li>
<li><div class="r"><button class="p"></button><svg><use href="#fo"/><use href="#n8"/></svg>Line Supports</div></li>
<li><div class="r"><svg><use href="#fo"/><use href="#n9"/></svg>Surface Supports</div></li>
<li><div class="r"><svg><use href="#fo"/><use href="#n10"/></svg>Line Hinges</div></li>
<li><div class="r"><svg><use href="#fo"/><use href="#n4"/></svg>Variable Thicknesses</div></li>
<li><div class="r"><svg><use href="#fo"/><use href="#n11"/></svg>Orthotropic Surfaces and Membranes</div></li>
<li><div class="r"><button class="p"></button><svg><use href="#fo"/><use href="#n12"/></svg>Cross-Sections</div></li>
<li><div class="r"><svg><use href="#fo"/><use href="#n13"/></svg>Member Hinges</div></li>
<li><div class="r"><svg><use href="#fo"/><use href="#n13"/></svg>Member Eccentricities</div></li>
<li><div class="r"><svg><use href="#fo"/><use href="#n13"/></svg>Member Divisions</div></li>
<li><div class="r"><button class="p"></button><svg><use href="#fo"/><use href="#n2"/></svg>Members</div></li>
<li><div class="r"><svg><use href="#fo"/><use href="#n10"/></svg>Ribs</div></li>
<li><div class="r"><svg><use href="#fo"/><use href="#n14"/></svg>Member Elastic Foundations</div></li>
<li><div class="r"><svg><use href="#fo"/><use href="#n15"/></svg>Member Nonlinearities</div></li>
<li><div class="r"><svg><use href="#fo"/><use href="#n13"/></svg>Sets of Members</div></li>
<li><div class="r"><svg><use href="#fo"/><use href="#n5"/></svg>Intersections of Surfaces</div></li>
<li><div class="r"><svg><use href="#fo"/><use href="#n6"/></svg>FE Mesh Refinements</div></li>
<li><div class="r"><svg><use href="#fo"/></svg>Nodal Releases</div></li>
<li><div class="r"><svg><use href="#fo"/></svg>Line Release Types</div></li>
<li><div class="r"><svg><use href="#fo"/><use href="#n10"/></svg>Line Releases</div></li>
<li><div class="r"><svg><use href="#fo"/><use href="#n16"/></svg>Surface Release Types</div></li>
<li><div class="r"><svg><use href="#fo"/><use href="#n16"/></svg>Surface Releases</div></li>
<li><div class="r"><svg><use href="#fo"/></svg>Connection of Two Members</div></li>
<li><div class="r"><svg><use href="#fo"/></svg>Joints</div></li>
<li><div class="r"><svg><use href="#fo"/><use href="#n17"/></svg>Nodal Constraints</div></li>
</ul></li>
<li><div class="r"><button class="m"></button><svg><use href="#fop"/></svg>Load Cases and Combinations</div>
<ul class="last">
<li><div class="r"><button class="p"></button><svg><use href="#lc"/></svg>Load Cases</div></li>
<li><div class="r"><button class="p"></button><svg><use href="#k1"/></svg>Actions</div></li>
<li><div class="r"><button class="p"></button><svg><use href="#k2"/></svg>Combination Expressions</div></li>
<li><div class="r"><button class="p"></button><svg><use href="#k3"/></svg>Action Combinations</div></li>
<li><div class="r"><button class="p"></button><svg><use href="#k4"/></svg>Load Combinations</div></li>
<li><div class="r"><button class="p"></button><svg><use href="#k5"/></svg>Result Combinations</div></li>
</ul></li>
<li><div class="r"><button class="p"></button><svg><use href="#fo"/></svg>Loads</div></li>
<li><div class="r"><button class="p"></button><svg><use href="#fo"/></svg>Results</div></li>
<li><div class="r"><svg><use href="#fo"/></svg>Sections</div></li>
<li><div class="r"><button class="p"></button><svg><use href="#fo"/></svg>Average Regions</div></li>
<li><div class="r"><svg><use href="#fo"/></svg>Printout Reports</div></li>
<li><div class="r"><button class="p"></button><svg><use href="#fo"/></svg>Guide Objects</div></li>
<li><div class="r"><button class="m"></button><svg><use href="#fop"/></svg>Add-on Modules</div>
<ul>
<li><div class="r"><button class="m"></button><svg><use href="#fop"/></svg>Favorites</div>
<ul class="last"><li><div class="r"><svg><use href="#m1"/></svg>RF-LAMINATE - Design of laminate surfaces</div></li></ul></li>
<li><div class="r"><svg><use href="#m2"/></svg>RF-STEEL Surfaces - General stress analysis</div></li>
<li><div class="r"><svg><use href="#m3"/></svg>RF-STEEL Members - General stress analysis</div></li>
<li><div class="r"><svg><use href="#mg"/><text x="3" y="14">EC</text></svg><b>RF-STEEL EC3 - Design of steel members</b></div></li>
<li><div class="r"><svg><use href="#mg"/><text x="0" y="14">AISC</text></svg>RF-STEEL AISC - Design of steel members</div></li>
<li><div class="r"><svg><use href="#mg"/><text x="4" y="14">IS</text></svg>RF-STEEL IS - Design of steel members</div></li>
<li><div class="r"><svg><use href="#mg"/><text x="1" y="14">SIA</text></svg>RF-STEEL SIA - Design of steel members</div></li>
</ul></li></ul></li></ul>
</div>
<div class="vs"><svg viewBox="0 0 16 16"><path d="M4 10l4-4 4 4"/></svg><i class="thumb"></i><svg viewBox="0 0 16 16"><path d="M4 6l4 4 4-4"/></svg></div>
</div>
<div class="hs"><svg viewBox="0 0 16 16"><path d="M10 4L6 8l4 4"/></svg><i class="thumb"></i><svg viewBox="0 0 16 16"><path d="M6 4l4 4-4 4"/></svg></div>
</div>
<div class="sidetabs"><button class="cur"><svg viewBox="0 0 18 18"><path d="M1 2h14v11H1z" fill="#fff" stroke="#47a"/><path d="M1 2h14v3H1z" fill="#47c"/><path d="M2 7h5l1 1h4v5H2z" fill="#fc4"/><circle cx="10" cy="10" r="4" fill="#def" stroke="#357" stroke-width="1.500"/><path d="M13 13l4 4" stroke="#357" stroke-width="2"/></svg>Data</button><button><svg><use href="#h1"/></svg>Display</button><button><svg viewBox="0 0 18 18"><path d="M2 13L12 2l1 9 4 5H4z" fill="#5b7cc4" stroke="#237"/><path d="M5 13l6-5" stroke="#fff"/></svg>Views</button><button><svg><use href="#y4"/></svg>Results</button></div>
</aside>

<section class="right">
<div class="view">
<p class="vt">Global Deformations u [mm]<br>LC1 : Peso Proprio</p>
<svg class="model" viewBox="309 110 1289 848" role="img" aria-label="Deformed footbridge model">
<g class="faces">
<path fill="#00009c" d="M1377 171L1394 152 1405 154 1412 207V230L1407 232 1379 255Q1368 215 1388 174z"/>
<path fill="#00f" d="M1334 225L1377 171 1388 174Q1368 215 1379 255L1347 289Q1341 256 1345 226z"/>
<path fill="#0099ff" d="M1302 264L1334 225 1345 226Q1341 256 1347 289L1318 330Q1311 296 1312 267z"/>
<path fill="#00f5f5" d="M1271 302L1302 264 1312 267Q1311 296 1318 330L1289 367 1282 304z"/>
<path fill="#00e68a" d="M1242 340L1271 302 1282 304 1289 367 1259 403 1252 342z"/>
<path fill="#0f0" d="M1211 378L1242 340 1252 342 1259 403 1228 440 1221 380z"/>
<path fill="#ff0" d="M1179 417L1211 378 1221 380 1228 440 1196 480 1189 419z"/>
<path fill="#cece00" d="M1143 458L1179 417 1189 419 1196 480 1160 520 1154 460z"/>
<path fill="#ffa800" d="M1102 503L1143 458 1154 460 1160 520 1118 564 1113 504z"/>
<path fill="#f00" d="M1051 556L1102 503 1113 504 1118 564 1066 618 1062 557z"/>
<path fill="#b90000" d="M827 720Q950 660 1051 556L1062 557 1066 618Q1000 685 913 740L830 790 835 723z"/>
<path fill="#f00" d="M775 743Q800 733 827 720L835 723 830 792 778 806 783 746z"/>
<path fill="#ffa800" d="M733 757L775 743 783 746 778 806 738 820 744 760z"/>
<path fill="#cece00" d="M698 768L733 757 744 760 738 820 701 828 708 771z"/>
<path fill="#ff0" d="M666 777L698 768 708 771 701 828 670 834 675 779z"/>
<path fill="#0f0" d="M634 785L666 777 675 779 670 834 638 842 644 787z"/>
<path fill="#00e68a" d="M604 791L634 785 644 787 638 842 608 850 614 794z"/>
<path fill="#00f5f5" d="M573 798L604 791 614 794 608 852 577 870 583 801z"/>
<path fill="#0099ff" d="M541 806L573 798 583 801 577 874 549 878Q554 840 551 808z"/>
<path fill="#00f" d="M496 817L541 806 551 808Q554 840 549 878L518 886Q527 815 496 817z"/>
<path fill="#00009c" d="M480 821L496 817Q527 815 518 886L487 897V907L482 910 471 908V897z"/>
</g>
<path class="edge" d="M1377 171L1388 174Q1368 215 1379 255M1334 225L1345 226Q1341 256 1347 289M1302 264L1312 267Q1311 296 1318 330M1271 302L1282 304 1289 367M1242 340L1252 342 1259 403M1211 378L1221 380 1228 440M1179 417L1189 419 1196 480M1143 458L1154 460 1160 520M1102 503L1113 504 1118 564M1051 556L1062 557 1066 618M827 720L835 723 830 790M775 743L783 746 778 806M733 757L744 760 738 820M698 768L708 771 701 828M666 777L675 779 670 834M634 785L644 787 638 842M604 791L614 794 608 850M573 798L583 801 577 870M541 806L551 808Q554 840 549 878M496 817Q527 815 518 886"/>
<g class="deck">
<path d="M1413 210L1343 293 1272 382 1199 468 1128 551 1057 623 984 687 913 738 836 783"/>
<path d="M1427 219L1357 302 1286 391 1213 477 1142 560 1071 632 998 696 927 746 860 785M1441 223L1371 306 1300 395 1227 481 1156 564 1085 636 1012 699 940 745M1455 226L1385 310 1314 399 1241 485 1169 568 1098 640 1030 700"/>
<path d="M1468 222L1396 312 1326 401 1254 487 1182 570 1120 634"/>
</g>
<path class="grain" d="M1413 210L1343 293 1272 382 1199 468 1128 551 1057 623 984 687 913 738M1427 219L1357 302 1286 391 1213 477 1142 560 1071 632 998 696M1441 223L1371 306 1300 395 1227 481 1156 564 1085 636M1455 226L1385 310 1314 399 1241 485 1169 568"/>
<g class="cross">
<path d="M1413 208l58 13M1418 216l50 12M1413 210l14 54M1343 293l53 13M1350 301l46 11M1343 293l12 60M1343 293l94-36M1272 382l53 13M1279 390l46 11M1272 382l12 56M1272 382l87-32M1199 468l53 13M1206 476l46 11M1199 468l13 54M1199 468l88-30M1128 551l53 13M1135 559l40 10M1128 551l12 46M1128 551l83-27M1057 623l44 10M1063 630l34 8M1057 623l10 36M1057 623l80-23M984 687l38 9M984 687l7 27M984 687l60-12M913 738l30 7M913 738l5 16M913 738l40-6"/>
<path class="navy" d="M1418 218l50 12M1413 210l14 54M1353 298l82-31"/>
<path class="sky" d="M1343 293l53 13M1350 302l46 11M1343 293l12 60"/>
<path class="teal" d="M1272 382l53 13M1279 391l46 11M1285 386l72-26"/>
<path class="green" d="M1272 382l12 56"/>
<path class="yellow" d="M1199 468l53 13M1206 477l46 11M1199 468l13 54M1212 473l74-25"/>
<path class="orange" d="M1128 551l53 13M1135 560l40 10M1140 556l70-22"/>
<path class="red" d="M1128 551l12 46M1063 632l34 8M1070 628l60-17"/>
<path class="thin" d="M1413 208l58 13M1418 216l50 12M1413 210l14 54M1343 293l53 13M1350 301l46 11M1343 293l12 60M1272 382l53 13M1279 390l46 11M1272 382l12 56M1199 468l53 13M1206 476l46 11M1199 468l13 54M1128 551l53 13M1135 559l40 10M1128 551l12 46"/>
</g>
<path fill="#800000" d="M478 890L551 870 590 866V920L578 925 478 902z"/>
<path fill="none" stroke="#00009c" stroke-width="1.500" d="M480 896l100 21M480 900l100 21M500 889l40-8M555 872l27 46M520 897l60-22M545 903l35-14M565 893h20"/>
<path fill="#0099ff" d="M568 876l18-3v7z"/>
<g class="faces">
<path fill="#00009c" d="M1487 198L1504 179 1514 181 1523 245 1522 257 1517 260 1510 258 1488 284Q1472 240 1497 201z"/>
<path fill="#00f" d="M1443 251L1487 198 1497 201Q1472 240 1488 284L1458 322Q1449 290 1453 253z"/>
<path fill="#0099ff" d="M1411 291L1443 251 1453 253Q1449 290 1458 322L1428 359Q1420 325 1421 293z"/>
<path fill="#00f5f5" d="M1380 329L1411 291 1421 293Q1420 325 1428 359L1399 395 1390 331z"/>
<path fill="#00e68a" d="M1349 366L1380 329 1390 331 1399 395 1370 432 1360 369z"/>
<path fill="#0f0" d="M1317 404L1349 366 1360 369 1370 432 1338 469 1329 406z"/>
<path fill="#ff0" d="M1286 443L1317 404 1329 406 1338 469 1305 508 1297 445z"/>
<path fill="#cece00" d="M1250 484L1286 443 1297 445 1305 508 1269 549 1261 487z"/>
<path fill="#ffa800" d="M1210 529L1250 484 1261 487 1269 549 1228 594 1220 532z"/>
<path fill="#f00" d="M1159 582L1210 529 1220 532 1228 594 1174 649 1169 584z"/>
<path fill="#b90000" d="M930 747L953 737 978 722 1020 696 1062 668 1103 633 1159 582 1169 584 1174 649Q1060 765 940 821L943 749z"/>
<path fill="#f00" d="M881 770L930 747 943 749 940 821 887 845 892 772z"/>
<path fill="#ffa800" d="M841 784L881 770 892 772 887 845 845 861 851 787z"/>
<path fill="#cece00" d="M807 795L841 784 851 787 845 861 809 873 816 797z"/>
<path fill="#ff0" d="M773 804L807 795 816 797 809 873 776 881 783 806z"/>
<path fill="#0f0" d="M743 811L773 804 783 806 776 881 746 889 753 813z"/>
<path fill="#00e68a" d="M712 818L743 811 753 813 746 889 715 896 722 820z"/>
<path fill="#00f5f5" d="M682 825L712 818 722 820 715 896 687 903 692 827z"/>
<path fill="#0099ff" d="M650 832L682 825 692 827 687 903 657 909Q665 870 660 835z"/>
<path fill="#00f" d="M607 844L650 832 660 835Q665 870 657 909L626 917Q640 845 607 844z"/>
<path fill="#00009c" d="M589 848L607 844Q640 845 626 917L597 923V934L592 937 581 935V913z"/>
</g>
<path class="edge" d="M1487 198L1497 201Q1472 240 1488 284M1443 251L1453 253Q1449 290 1458 322M1411 291L1421 293Q1420 325 1428 359M1380 329L1390 331 1399 395M1349 366L1360 369 1370 432M1317 404L1329 406 1338 469M1286 443L1297 445 1305 508M1250 484L1261 487 1269 549M1210 529L1220 532 1228 594M1159 582L1169 584 1174 649M930 747L943 749 940 821M881 770L892 772 887 845M841 784L851 787 845 861M807 795L816 797 809 873M773 804L783 806 776 881M743 811L753 813 746 889M712 818L722 820 715 896M682 825L692 827 687 903M650 832L660 835Q665 870 657 909M607 844Q640 845 626 917"/>
</svg>
<p class="vb">Max u: 19.2, Min u: 0.0 mm</p>
<div class="panel">
<div class="ph"><b>Panel</b><button aria-label="Close panel"><svg viewBox="0 0 8 8"><path d="M0 0l8 8M8 0L0 8" stroke="#666"/></svg></button></div>
<div class="pb">
<p>Global Deformations</p><p>u [mm]</p>
<div class="legend"><div class="scale"><i class="c1"></i><i class="c2"></i><i class="c3"></i><i class="c4"></i><i class="c5"></i><i class="c6"></i><i class="c7"></i><i class="c8"></i><i class="c9"></i><i class="c10"></i><i class="c11"></i></div>
<ol><li>19.2</li><li>17.4</li><li>15.7</li><li>13.9</li><li>12.2</li><li>10.5</li><li>8.7</li><li>7.0</li><li>5.2</li><li>3.5</li><li>1.7</li><li>0.0</li></ol></div>
<dl><dt>Max</dt><dd>:</dd><dd>19.2</dd><dt>Min</dt><dd>:</dd><dd>0.0</dd></dl>
<button class="find" aria-label="Details"><svg viewBox="0 0 20 18"><path d="M1 2h15M1 5h15M1 8h9M1 11h7" stroke="#777" stroke-width="1.500"/><circle cx="12" cy="9" r="4" fill="#cfe2f6" stroke="#57a" stroke-width="1.500"/><path d="M15 12l4 5" stroke="#57a" stroke-width="2.500"/></svg></button>
</div>
<div class="pt"><button class="cur"><svg viewBox="0 0 20 20"><path d="M2 2h9v16H2z" fill="url(#rb)" stroke="#333"/><path d="M2 5h9M2 8h9M2 11.500h9M2 15h9" stroke="#333"/><path d="M13 3h4M13 7h4M13 11h4M13 15h4" stroke="#555" stroke-width="2"/></svg></button><button><svg viewBox="0 0 20 20"><path d="M10 2v14M5 17h10M3 5h14M5 5l-3 7h6zM15 5l-3 7h6z" fill="#dcb83c" stroke="#7a6318" stroke-width="1.300"/></svg></button><button><svg><use href="#mic"/></svg></button></div>
</div>
</div>

<section class="dock">
<div class="cap"><h2>1.1 Nodes</h2><svg viewBox="0 0 24 10"><path d="M2 1v5M6 1v5M0 6h8M4 6v4M2 1h4M15 1l8 8M23 1l-8 8" fill="none" stroke="#666" stroke-width="1.200"/></svg></div>
<div class="band dbar" role="toolbar">
<button class="on"><svg><use href="#a1"/></svg></button><button><svg><use href="#a2"/></svg></button><button><svg><use href="#a3"/></svg></button><button><svg><use href="#a4"/></svg></button><button><svg><use href="#a5"/></svg></button><i class="sep"></i>
<button><svg><use href="#a6"/></svg></button><button><svg><use href="#a7"/></svg></button><i class="sep"></i>
<button class="on"><svg><use href="#b1"/></svg></button><button class="on"><svg><use href="#b2"/></svg></button><button><svg><use href="#b3"/></svg></button><i class="sep"></i>
<button><svg><use href="#c1"/></svg></button><button><svg><use href="#c2"/></svg></button><button><svg><use href="#c3"/></svg></button><i class="sep"></i>
<button><svg><use href="#c2"/></svg></button><i class="sep"></i>
<button><svg><use href="#d1"/></svg></button><button><svg><use href="#d2"/></svg></button><button><svg><use href="#d3"/></svg></button><i class="sep"></i>
<button><svg><use href="#e1"/></svg></button><button><svg><use href="#e2"/></svg></button><i class="sep"></i>
<button><svg><use href="#e3"/></svg></button><i class="sep"></i>
<button><svg><use href="#h1"/></svg></button><button><svg><use href="#glas"/></svg></button><button><svg><use href="#h3"/></svg></button><button><svg><use href="#h4"/></svg></button><i class="sep"></i>
<button><svg><use href="#i1"/></svg></button><button><svg><use href="#i2"/></svg></button><button><svg><use href="#i3"/></svg></button><i class="sep"></i>
<button><svg><use href="#i4"/></svg></button></div>
<div class="gridbox">
<table>
<colgroup><col class="w45"><col class="w83"><col class="w73"><col class="w89"><col class="w78"><col class="w78"><col class="w78"><col></colgroup>
<thead>
<tr class="let"><th rowspan="3" class="rh">Node<br>No.</th><th class="sel">A</th><th>B</th><th>C</th><th>D</th><th>E</th><th>F</th><th>G</th></tr>
<tr class="h1"><th></th><th>Reference</th><th>Coordinate</th><th colspan="3">Node Coordinates</th><th></th></tr>
<tr class="h2"><th>Node Type</th><th>Node</th><th>System</th><th>X [m]</th><th>Y [m]</th><th>Z [m]</th><th>Comment</th></tr>
</thead>
<tbody>
<tr><th class="sel">1</th><td class="foc">Standard</td><td class="ce">0</td><td><u>C</u>artesian</td><td class="n">2.252</td><td class="n">1.550</td><td class="n">-0.120</td><td></td></tr>
<tr><th>2</th><td>Standard</td><td class="ce">0</td><td><u>C</u>artesian</td><td class="n">2.628</td><td class="n">1.550</td><td class="n">-0.120</td><td></td></tr>
<tr><th>3</th><td>Standard</td><td class="ce">0</td><td><u>C</u>artesian</td><td class="n">1.000</td><td class="n">1.550</td><td class="n">-0.120</td><td></td></tr>
<tr><th>4</th><td>Standard</td><td class="ce">0</td><td><u>C</u>artesian</td><td class="n">3.880</td><td class="n">1.550</td><td class="n">-0.120</td><td></td></tr>
</tbody></table>
<div class="vs"><svg viewBox="0 0 16 16"><path d="M4 10l4-4 4 4"/></svg><i class="thumb"></i><svg viewBox="0 0 16 16"><path d="M4 6l4 4 4-4"/></svg></div>
</div>
<div class="tabs"><button class="cur">Nodes</button><button>Lines</button><button>Materials</button><button>Surfaces</button><button>Solids</button><button>Openings</button><button>Nodal Supports</button><button>Line Supports</button><button>Surface Supports</button><button>Line Hinges</button><button>Cross-Sections</button><button>Member Hinges</button><button>Member Eccentricities</button><button>Member Divisions</button><button>Members</button><button>Member Elastic Foundations</button>
<div class="tnav"><button disabled aria-label="First"><svg viewBox="0 0 10 10"><path d="M2 1v8M8 1L4 5l4 4z"/></svg></button><button disabled aria-label="Previous"><svg viewBox="0 0 10 10"><path d="M7 1L3 5l4 4z"/></svg></button><button aria-label="Next"><svg viewBox="0 0 10 10"><path d="M3 1l4 4-4 4z"/></svg></button><button aria-label="Last"><svg viewBox="0 0 10 10"><path d="M8 1v8M2 1l4 4-4 4z"/></svg></button></div></div>
</section>
</section>
</main>

<footer class="status"><span class="wp">Workplane</span>
<div class="togs"><button class="in">SNAP</button><button>GRID</button><button class="in">CARTES</button><button class="in">OSNAP</button><button class="in">GLINES</button><button class="in">DXF</button></div>
<span class="cs">CS: Global XYZ</span><span class="pln">Plane: XY</span><span class="co">X:&nbsp; 9.542 m</span><span class="co">Y:&nbsp; -2.070 m</span><span class="co z">Z:&nbsp; 0.000 m</span></footer>
</div>
</body>
</html>
```
FILE: styles.css
```css
* { box-sizing: border-box; }
html, body { height: 100%; margin: 0; }
body { font: 11px/16px "Open Sans", "Noto Sans", sans-serif; color: #000; background: #d0d3dd; }
button { font: inherit; color: inherit; background: none; border: 0; padding: 0; margin: 0; }
h1, h2, p, ul, ol, dl, dd { margin: 0; padding: 0; font-weight: normal; font-size: inherit; }
ul, ol { list-style: none; }
.defs { position: absolute; width: 0; height: 0; }
.i16 { width: 16px; height: 16px; flex: none; }
.app { height: 100vh; display: flex; flex-direction: column; border: 1px solid #1883d8; background: #d0d3dd; overflow: hidden; }

.title { height: 30px; flex: none; background: #0078d7; color: #fff; display: flex; align-items: center; padding-left: 8px; gap: 5px; }
.wbtns { margin-left: auto; display: flex; }
.wbtns button { width: 46px; height: 30px; display: grid; place-items: center; }
.wbtns svg { width: 10px; height: 10px; fill: none; stroke: #fff; overflow: visible; }

.menu { height: 25px; flex: none; display: flex; align-items: center; padding-left: 3px; color: #444850; }
.menu button { padding: 0 8px; }
.menu .mdi { width: 40px; height: 10px; margin: 6px 5px 0 auto; }

.grip { width: 3px; height: 15px; margin: 0 3px 0 2px; flex: none; background: repeating-linear-gradient(#8f96a5 0 2px, transparent 2px 4px); background-size: 2px 100%; background-repeat: no-repeat; }
.bars { flex: none; padding-left: 2px; }
.row { display: flex; gap: 1px; height: 26px; }
.band { display: flex; align-items: center; background: linear-gradient(#eef1f7, #d4d9e5); border-bottom: 1px solid #a9adb8; border-radius: 0 3px 3px 0; }
.band button { width: 22px; height: 22px; display: grid; place-items: center; flex: none; }
.band svg { width: 18px; height: 18px; }
.band .on { background: linear-gradient(#fddca0, #ffbe5c 50%, #ffe49a); border: 1px solid #c29a55; }
.sep { width: 2px; height: 17px; margin: 0 3px; border-left: 1px solid #9aa0ae; background: #fff; flex: none; }
.band button.dd { width: 13px; }
.dd::before { content: ""; border: 3px solid transparent; border-top: 4px solid #6a6e78; border-bottom: 0; }
.combo { appearance: none; width: 216px; height: 20px; margin: 0 3px 0 2px; padding: 0 4px; border: 0; border-radius: 0; font: inherit; color: #000; background: #fff url("data:image/svg+xml,%3Csvg xmlns='http://www.w3.org/2000/svg' viewBox='0 0 14 20'%3E%3Cpath fill='%23e6eaf2' stroke='%23c4c8d2' d='M0 0h14v20H0z'/%3E%3Cpath fill='%23777' d='M4 8h6l-3 4z'/%3E%3C/svg%3E") right / 14px 20px no-repeat; }

.work { flex: 1; min-height: 0; display: flex; gap: 6px; }
.side { width: 301px; flex: none; display: flex; flex-direction: column; }
.cap { height: 20px; flex: none; display: flex; align-items: center; justify-content: space-between; padding: 0 6px 0 4px; background: #b8bfca; color: #444850; }
.cap svg { width: 24px; height: 10px; }
.treebox { margin: 3px 1px 0 3px; flex: 1; min-height: 0; display: flex; flex-direction: column; background: #fcfbf5; border: 1px solid #8a93a3; border-right-color: #e8e8e8; border-bottom-color: #e8e8e8; }
.treewrap { flex: 1; min-height: 0; display: flex; }
.tree { flex: 1; min-width: 0; overflow: hidden; padding-left: 3px; }
.tree ul { margin-left: 19px; background: repeating-linear-gradient(#888 0 1px, transparent 1px 2px) 0 0 / 1px 100% no-repeat; }
.tree > ul { margin-left: 8px; }
.tree .last { background-size: 1px calc(100% - 9px); }
.tree > .last { background-size: 1px 9px; }
.r { height: 18px; display: flex; align-items: center; white-space: nowrap; padding-left: 12px; background: repeating-linear-gradient(90deg, #888 0 1px, transparent 1px 2px) 0 9px / 12px 1px no-repeat; }
.r.root { padding-left: 0; background: none; }
.r svg { width: 16px; height: 16px; flex: none; margin-right: 4px; }
.r svg text { font: bold 7px "Liberation Sans", sans-serif; }
.r button { position: relative; width: 9px; height: 9px; margin: 0 8px 0 -17px; flex: none; border: 1px solid #8a93a3; background: linear-gradient(#24459a, #24459a) 1px 3px / 5px 1px no-repeat, #fff; }
.r .p { background: linear-gradient(#24459a, #24459a) 1px 3px / 5px 1px no-repeat, linear-gradient(#24459a, #24459a) 3px 1px / 1px 5px no-repeat, #fff; }
.vs { width: 17px; flex: none; background: #f0f0f0; display: flex; flex-direction: column; align-items: center; justify-content: space-between; }
.vs svg, .hs svg { width: 16px; height: 17px; fill: none; stroke: #505050; stroke-width: 2; flex: none; }
.vs .thumb { width: 15px; background: #cdcdcd; height: 448px; margin-bottom: auto; }
.hs { height: 18px; flex: none; display: flex; align-items: center; background: #f0f0f0; padding-right: 17px; }
.hs .thumb { height: 14px; width: 106px; background: #cdcdcd; margin-right: auto; }
.sidetabs { height: 25px; flex: none; display: flex; align-items: center; gap: 6px; padding-left: 3px; color: #444850; }
.sidetabs button { display: flex; align-items: center; gap: 1px; height: 20px; padding: 0 3px 0 2px; }
.sidetabs svg { width: 18px; height: 18px; }
.cur { background: #eef2f8; border-radius: 0 0 3px 3px; }

.right { flex: 1; min-width: 0; display: flex; flex-direction: column; gap: 5px; padding-top: 1px; }
.view { flex: 1; min-height: 0; position: relative; background: #fff; border: 1px solid #555b66; border-right-color: #dde; border-bottom-color: #dde; display: flex; font: 11px/14px "Liberation Sans", Arial, sans-serif; }
.model { flex: 1; min-width: 0; height: 100%; }
.vt { position: absolute; left: 4px; top: 5px; }
.vb { position: absolute; left: 4px; bottom: 5px; }
.faces { shape-rendering: crispEdges; }
.edge { fill: none; stroke: #7a1010; stroke-width: 1; }
.deck path { fill: none; stroke: #800000; stroke-width: 8; }
.deck path:last-child { stroke-width: 5; }
.grain { fill: none; stroke: #4c1010; stroke-width: 1; stroke-dasharray: 6 4; }
.cross path { fill: none; stroke-width: 3; }
.cross path:first-child { stroke: #800000; stroke-width: 7; }
.cross .navy { stroke: #00008c; }
.cross .sky { stroke: #09f; }
.cross .teal { stroke: #00d8a8; }
.cross .green { stroke: #00c820; }
.cross .yellow { stroke: #f5e400; }
.cross .orange { stroke: #ffa800; }
.cross .red { stroke: #e00000; }
.cross .thin { stroke: #800000; stroke-width: 1; }

.panel { position: absolute; left: 116px; top: 75px; width: 164px; height: 515px; display: flex; flex-direction: column; background: #e5ebf5; border: 1px solid #e5ebf5; border-right: 2px solid #7f858f; border-bottom: 2px solid #7f858f; padding: 0 2px 2px 3px; font: 11px/17px "Liberation Sans", Arial, sans-serif; }
.ph { height: 26px; display: flex; align-items: center; justify-content: space-between; padding: 4px 4px 0 2px; color: #444850; font-family: "Open Sans", sans-serif; }
.ph svg { width: 8px; height: 8px; display: block; }
.pb { flex: 1; display: flex; flex-direction: column; background: #f0f0f0; border: 1px solid #a0abbe; padding: 4px 2px 4px 4px; }
.pb p { padding-left: 1px; }
.legend { height: 215px; padding: 2px 0 0 44px; display: flex; background: #f9f7f1; border: 1px solid #999; border-right-color: #fff; border-bottom-color: #fff; }
.scale { width: 28px; margin-top: 8px; height: 188px; border: 1px solid #000; }
.scale i { display: block; height: 17px; border-bottom: 1px solid #000; position: relative; }
.scale i:last-child { border: 0; }
.scale i::after, .scale i:first-child::before { content: ""; position: absolute; left: 26px; bottom: -1px; width: 7px; height: 1px; background: #000; }
.scale i:first-child::before { bottom: 16px; }
.c1 { background: #b90000; } .c2 { background: #f00; } .c3 { background: #ffa800; } .c4 { background: #cece00; } .c5 { background: #ff0; } .c6 { background: #0f0; }
.c7 { background: #00e68a; } .c8 { background: #00f5f5; } .c9 { background: #09f; } .c10 { background: #00f; } .c11 { background: #00009c; }
.legend li { width: 31px; text-align: right; }
.pb dl { height: 36px; margin-top: 9px; padding-left: 42px; display: grid; grid-template-columns: 24px 12px 26px; background: #f0f5fc; border: 1px solid #dfe6f4; border-right-color: #a9a9ee; border-bottom-color: #a9a9ee; }
.pb dd { text-align: right; }
.pb dd:nth-of-type(odd) { text-align: left; padding-left: 4px; }
.find { margin: auto 0 0 auto; width: 25px; height: 21px; background: #e2e2e2; border: 1px solid #aaa; display: grid; place-items: center; }
.find svg { width: 18px; height: 16px; }
.pt { height: 24px; background: #d0d3dd; display: flex; align-items: center; gap: 8px; padding-left: 2px; }
.pt button { width: 22px; height: 22px; display: grid; place-items: center; }
.pt svg { width: 16px; height: 16px; }

.dock { flex: none; height: 216px; display: flex; flex-direction: column; background: #f0f0f0; font: 11px/14px "Liberation Sans", Arial, sans-serif; }
.dock .cap { font: 11px/16px "Open Sans", sans-serif; }
.dbar { height: 26px; padding-left: 8px; border-radius: 0; border-bottom-color: #777; }
.gridbox { display: flex; padding: 2px 2px 0 2px; }
.gridbox .thumb { height: 17px; }
table { flex: 1; border-collapse: collapse; table-layout: fixed; width: 100%; }
th, td { font-weight: normal; padding: 0 3px; border: 1px solid #999; height: 16px; line-height: 14px; overflow: hidden; white-space: nowrap; }
td { background: #fff; }
thead th { background: #f0f0f0; }
.let th, tbody th { background: #e0e0e0; }
.let th { height: 14px; line-height: 12px; border-color: #666; }
.let .rh { line-height: 13px; }
.let .sel, .sel.sel { background: #0078d7; color: #fff; }
.h1 th { border-bottom: 0; }
.h2 th { border-top: 0; height: 17px; }
.n { text-align: right; }
.ce { text-align: center; }
.foc { outline: 1px dotted #000; outline-offset: -1px; }
.w45 { width: 45px; } .w83 { width: 84px; } .w73 { width: 72px; } .w89 { width: 90px; } .w78 { width: 78px; }
.tabs { margin-top: 18px; border-top: 1px solid #555; display: flex; height: 17px; }
.tabs > button { padding: 0 3px; border: 1px solid #777; border-width: 0 1px 1px 0; border-radius: 0 0 4px 2px; background: #e8e8e8; white-space: nowrap; }
.tabs > .cur { background: #f0f0f0; margin-top: -1px; }
.tnav { margin-left: auto; display: flex; }
.tnav button { width: 16px; border: 1px solid; border-color: #fff #888 #888 #fff; display: grid; place-items: center; }
.tnav svg { width: 9px; height: 9px; fill: #000; stroke: #000; }
.tnav button:disabled svg { fill: #999; stroke: #999; }

.status { height: 20px; flex: none; display: flex; align-items: center; background: linear-gradient(#d9dce3, #a9aeb9 60%, #c2c6cf); color: #33363c; padding-left: 4px; }
.wp { flex: 1; }
.togs { display: flex; gap: 3px; margin-right: 101px; font-size: 12px; }
.togs button { padding: 0 1px; height: 18px; border: 1px solid #d8dbe2; border-bottom-color: #aaa; border-right-color: #aaa; }
.togs .in { border-color: #111 #eee #eee #111; }
.cs { width: 88px; }
.pln, .co { border-left: 1px solid #8d929d; padding-left: 3px; width: 88px; }
.co { width: 74px; }
.z { width: 91px; }
```
